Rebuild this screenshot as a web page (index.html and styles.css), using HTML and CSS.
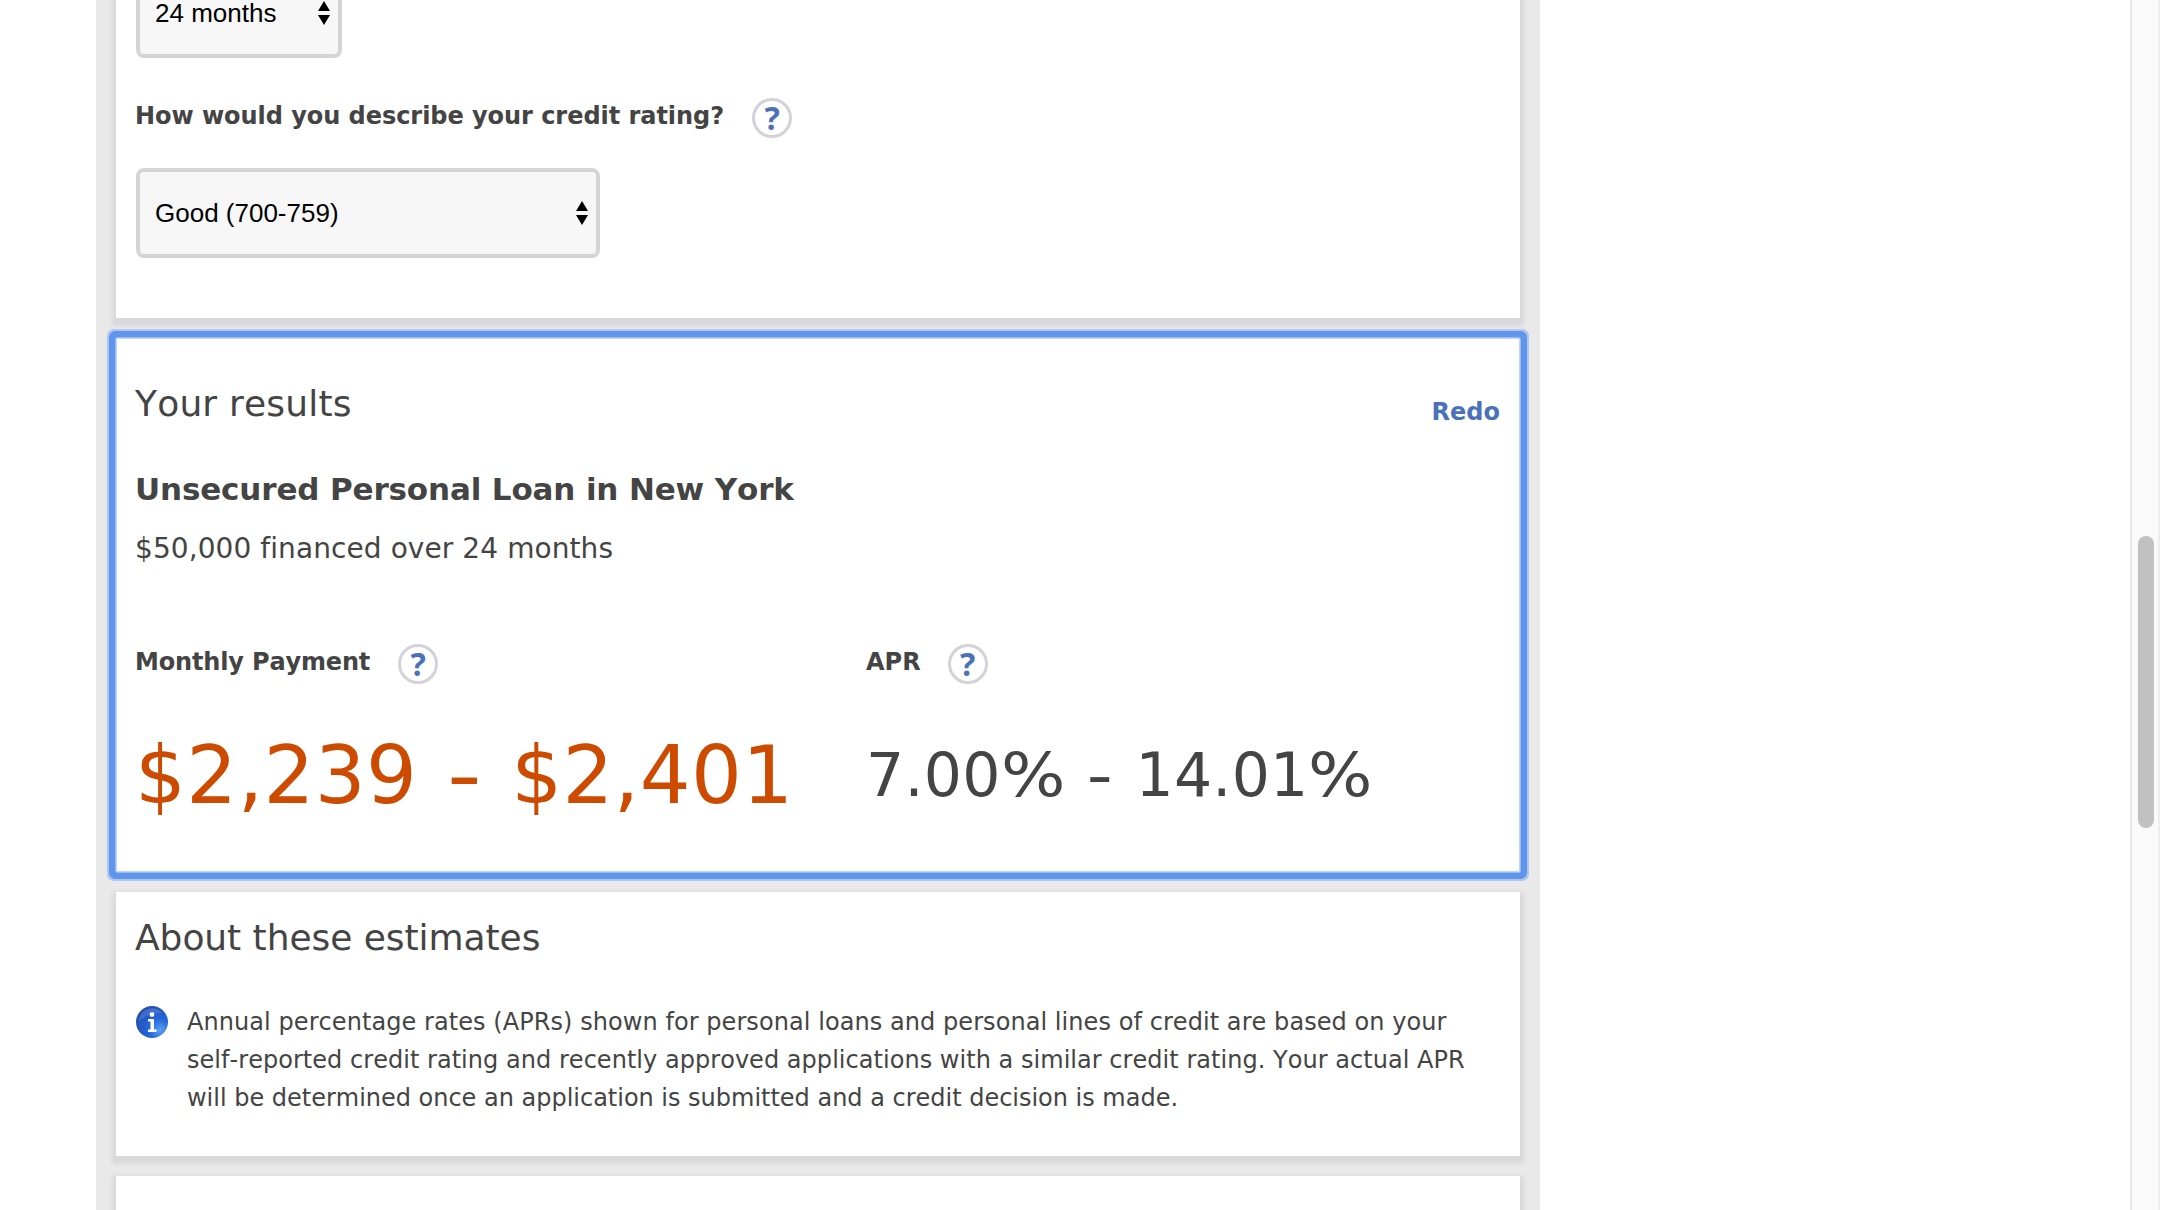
FILE: index.html
```html
<!DOCTYPE html>
<html lang="en">
<head>
<meta charset="utf-8">
<title>Loan rate calculator</title>
<link rel="stylesheet" href="styles.css">
</head>
<body>
<div class="page">
  <main class="column">
    <section class="card card-form">
      <div class="select select-term"><span>24 months</span>
        <svg class="arrows" viewBox="0 0 12 24"><path d="M6 0l6 10H0zM6 24l6-10H0z"/></svg>
      </div>
      <div class="label-row rating-row">
        <span class="label label-rating">How would you describe your credit rating?</span>
        <span class="help">?</span>
      </div>
      <div class="select select-rating"><span>Good (700-759)</span>
        <svg class="arrows" viewBox="0 0 12 24"><path d="M6 0l6 10H0zM6 24l6-10H0z"/></svg>
      </div>
    </section>

    <section class="card card-results">
      <header class="results-head">
        <h2 class="title title-results">Your results</h2>
        <a class="redo">Redo</a>
      </header>
      <h3 class="product">Unsecured Personal Loan in New York</h3>
      <p class="terms">$50,000 financed over 24 months</p>
      <div class="figures">
        <div class="figure">
          <div class="label-row"><span class="label label-monthly">Monthly Payment</span><span class="help">?</span></div>
          <div class="payment">$2,239 <span class="dash">-</span> $2,401</div>
        </div>
        <div class="figure">
          <div class="label-row"><span class="label">APR</span><span class="help help-apr">?</span></div>
          <div class="rate">7.00<span class="pct">%</span> <span class="dash">-</span> 14.01<span class="pct">%</span></div>
        </div>
      </div>
    </section>

    <section class="card card-about">
      <h2 class="title title-about">About these estimates</h2>
      <div class="note">
        <svg class="info" viewBox="0 0 32 32">
          <defs>
            <radialGradient id="ball" cx=".75" cy=".75" r=".8">
              <stop offset="0" stop-color="#58a0f0"/><stop offset=".45" stop-color="#2465d8"/><stop offset="1" stop-color="#2450b4"/>
            </radialGradient>
          </defs>
          <circle cx="16" cy="16" r="16" fill="url(#ball)"/>
          <path d="M3 15A13 13 0 0 1 26 7Q12 7 3 15z" fill="#fff" opacity=".14"/>
          <circle cx="16" cy="8.6" r="2.4" fill="#fff"/>
          <path d="M12 13h6v10.500h2.500V26h-8.500v-2.500h2.500v-8H12z" fill="#fff"/>
        </svg>
        <p class="text"><span class="line-a">Annual percentage rates (APRs) shown for personal loans and personal lines of credit are based on your</span><br><span class="line-b">self-reported credit rating and recently approved applications with a similar credit rating. Your actual APR</span><br><span class="line-c">will be determined once an application is submitted and a credit decision is made.</span></p>
      </div>
    </section>

    <section class="card card-next"></section>
  </main>
  <div class="scrollbar"><div class="thumb"></div></div>
</div>
</body>
</html>
```
FILE: styles.css
```css
* { box-sizing: border-box; }
body {
  margin: 0;
  background: #fff;
  color: #444;
  font-family: Verdana, "DejaVu Sans", sans-serif;
  font-kerning: none;
  font-variant-ligatures: none;
}
h2, h3, p { margin: 0; font-weight: normal; }
.page {
  display: flex;
  justify-content: space-between;
  height: 1210px;
  overflow: hidden;
}
.column {
  display: flex;
  flex-direction: column;
  gap: 20px;
  width: 1444px;
  height: 1210px;
  margin-left: 96px;
  padding: 0 20px;
  background: #e9e9e9;
  overflow: hidden;
}
.card {
  flex: none;
  padding: 0 20px 0 19px;
  background: #fff;
  box-shadow: 0 4px 4px 4px #d9d9d9;
}
.card-form { height: 350px; margin-top: -32px; }
.select {
  display: flex;
  align-items: center;
  justify-content: space-between;
  height: 90px;
  margin-left: 1px;
  padding: 0 8px 0 15px;
  border: 4px solid #d5d5d5;
  border-radius: 8px;
  background: #f7f7f7;
  color: #000;
  font: 26px/30px "Liberation Sans", Arial, sans-serif;
}
.select-term { width: 206px; }
.select-rating { width: 464px; }
.arrows { width: 12px; height: 24px; }
.label-row { display: flex; align-items: flex-start; height: 40px; }
.rating-row { margin: 40px 0 30px; }
.label {
  font-size: 24px;
  line-height: 36px;
  font-weight: bold;
  white-space: nowrap;
}
.label-rating { letter-spacing: -.045px; }
.label-monthly { letter-spacing: -.16px; }
.help {
  width: 40px;
  height: 40px;
  margin-left: 28px;
  border: 3px solid #d2d3d9;
  border-radius: 50%;
  color: #4b72b9;
  font-family: "Noto Sans", sans-serif;
  font-size: 32px;
  line-height: 33px;
  font-weight: bold;
  text-align: center;
}
.help-apr { margin-left: 27px; }
.card-results {
  position: relative;
  height: 534px;
  padding-top: 41px;
  border-radius: 2px;
  box-shadow: inset 0 0 0 1px #c3d4f3, 0 0 0 1px #9dbcf0, 0 0 0 7px #6095ee, 0 0 0 9px #b0c6ec;
}
.results-head { display: flex; justify-content: space-between; height: 50px; }
.title { font-size: 36px; line-height: 50px; white-space: nowrap; }
.title-results { letter-spacing: .18px; }
.title-about { letter-spacing: -.05px; }
.redo {
  padding-top: 15px;
  color: #4b72b9;
  font-size: 24px;
  line-height: 36px;
  font-weight: bold;
}
.product {
  margin-top: 40px;
  font-size: 31px;
  line-height: 40px;
  font-weight: bold;
  letter-spacing: -.15px;
  white-space: nowrap;
}
.terms {
  margin-top: 21px;
  font-size: 28px;
  line-height: 38px;
  letter-spacing: .08px;
  white-space: nowrap;
}
.figures { display: flex; margin-top: 76px; }
.figure { width: 731px; }
.figure:last-child { width: 600px; }
.payment {
  height: 100px;
  margin-top: 42px;
  color: #cc4b00;
  font-size: 80px;
  line-height: 100px;
  letter-spacing: .42px;
  word-spacing: 2.7px;
  white-space: nowrap;
}
.rate {
  height: 100px;
  margin-top: 41px;
  font-size: 60px;
  line-height: 100px;
  letter-spacing: .25px;
  word-spacing: 2px;
  white-space: nowrap;
}
.dash { display: inline-block; margin: 0 .046em; transform: scaleX(1.2); }
.pct { display: inline-block; margin-right: .126em; transform: scaleX(1.13); transform-origin: left; }
.card-about { height: 264px; padding-top: 21px; }
.note { display: flex; margin-top: 40px; }
.info { width: 32px; height: 32px; margin: 3px 19px 0 1px; }
.text { font-size: 24px; line-height: 38px; white-space: nowrap; }
.line-a { letter-spacing: .065px; }
.line-b { letter-spacing: .036px; }
.line-c { letter-spacing: -.013px; }
.card-next { height: 60px; }
.scrollbar {
  width: 30px;
  padding: 536px 4px 0 6px;
  border-left: 2px solid #e7e7e7;
  border-right: 2px solid #ededed;
  background: #fafafa;
}
.thumb { width: 16px; height: 292px; border-radius: 8px; background: #c1c1c1; }
```
